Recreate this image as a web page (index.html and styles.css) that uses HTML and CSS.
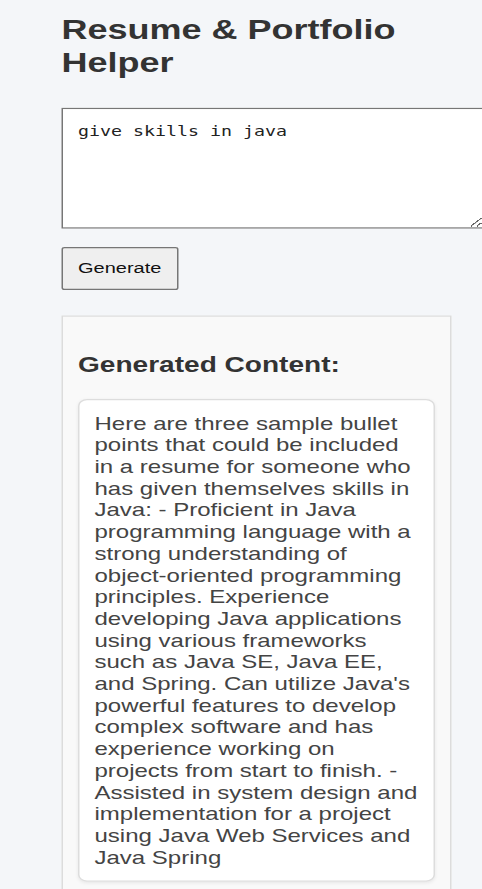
FILE: index.html
```html
<!DOCTYPE html>
<html lang="en">
<head>
<meta charset="utf-8">
<title>Resume &amp; Portfolio Helper</title>
<link rel="stylesheet" href="styles.css">
</head>
<body>
<div class="screen">
  <div class="stage">
    <main class="app">
      <h2 class="app-title">Resume &amp; Portfolio Helper</h2>
      <textarea class="prompt" spellcheck="false">give skills in java</textarea>
      <button class="generate-btn" type="button">Generate</button>
      <section class="result">
        <h3 class="result-title">Generated Content:</h3>
        <div class="result-body">Here are three sample bullet points that could be included in a resume for someone who has given themselves skills in Java: - Proficient in Java programming language with a strong understanding of object-oriented programming principles. Experience developing Java applications using various frameworks such as Java SE, Java EE, and Spring. Can utilize Java's powerful features to develop complex software and has experience working on projects from start to finish. - Assisted in system design and implementation for a project using Java Web Services and Java Spring</div>
      </section>
    </main>
  </div>
</div>
</body>
</html>
```

FILE: styles.css
```css
html {
  background: #f4f6f9;
}

body {
  margin: 0;
  font-family: "Liberation Sans", Arial, Helvetica, sans-serif;
  color: #333;
}

/* window-sized frame; the stretched app is clipped to it */
.screen {
  width: 100%;
  height: 100vh;
  overflow: hidden;
}

.stage {
  width: 321px;
  transform: scale(1.5, 1.16);
  transform-origin: 0 0;
}

.app {
  width: 260px;
  margin-left: 41px;
  padding-top: 1px;
}

.app-title {
  margin: 11.4px 0 25.5px;
  font-size: 24px;
  font-weight: bold;
  line-height: 27.6px;
  color: #333;
}

.prompt {
  display: block;
  box-sizing: content-box;
  width: 100%;
  height: 80.7px;
  margin: 0;
  padding: 11.6px 10px 10px;
  border: 1px solid #767676;
  border-radius: 0;
  background: #fff;
  font-family: "DejaVu Sans Mono", "Liberation Mono", monospace;
  font-size: 12.2px;
  color: #222;
  resize: vertical;
}

.generate-btn {
  display: block;
  margin-top: 15.5px;
  padding: 10px;
  border: 1px solid #767676;
  border-radius: 2px;
  background: #efefef;
  font-family: "Liberation Sans", Arial, sans-serif;
  font-size: 13.33px;
  line-height: 14.7px;
  color: #111;
}

.result {
  margin-top: 22px;
  padding: 10px;
  border: 1px solid #dcdcdc;
  background: #f9f9f9;
}

.result-title {
  margin: 21.5px 0 18.4px;
  font-size: 18.72px;
  font-weight: bold;
  line-height: 21.5px;
  color: #333;
}

.result-body {
  padding: 11.7px 10px 10px;
  border: 1px solid #dddddd;
  border-radius: 6px;
  background: #fff;
  box-shadow: 0 1px 3px rgba(0, 0, 0, 0.08);
  font-size: 16px;
  line-height: 18.7px;
  color: #444;
}
```
